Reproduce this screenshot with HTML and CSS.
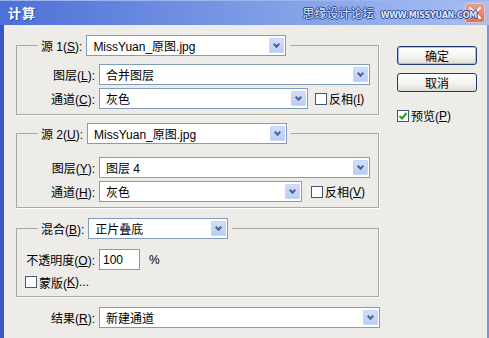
FILE: index.html
```html
<!DOCTYPE html>
<html lang="zh-CN">
<head>
    <meta charset="UTF-8">
    <title>计算</title>
    <link rel="stylesheet" href="styles.css">
</head>
<body>
<div class="window">
    <div class="titlebar">
        <span class="title">计算</span>
        <span class="close">
            <svg width="20" height="20" viewBox="0 0 20 20">
                <path d="M5 5 L15 15 M15 5 L5 15" stroke="#fff" stroke-width="2.4" stroke-linecap="round"/>
            </svg>
        </span>
        <span class="watermark">思缘设计论坛<small>WWW.MISSYUAN.COM</small></span>
    </div>

    <div class="dialog">
        <div class="main">
            <fieldset class="group group-1">
                <legend>
                    <span class="legend-label">源 1(<u>S</u>):</span>
                    <div class="select w-200"><span>MissYuan_原图.jpg</span><i class="arrow"></i></div>
                </legend>
                <div class="row">
                    <span class="label">图层(<u>L</u>):</span>
                    <div class="select w-271"><span>合并图层</span><i class="arrow"></i></div>
                </div>
                <div class="row">
                    <span class="label">通道(<u>C</u>):</span>
                    <div class="select w-209"><span>灰色</span><i class="arrow"></i></div>
                    <span class="check check-invert"><i class="box"></i>反相(<u>I</u>)</span>
                </div>
            </fieldset>

            <fieldset class="group group-2">
                <legend>
                    <span class="legend-label">源 2(<u>U</u>):</span>
                    <div class="select w-200"><span>MissYuan_原图.jpg</span><i class="arrow"></i></div>
                </legend>
                <div class="row">
                    <span class="label">图层(<u>Y</u>):</span>
                    <div class="select w-271"><span>图层 4</span><i class="arrow"></i></div>
                </div>
                <div class="row">
                    <span class="label">通道(<u>H</u>):</span>
                    <div class="select w-203"><span>灰色</span><i class="arrow"></i></div>
                    <span class="check check-invert wide"><i class="box"></i>反相(<u>V</u>)</span>
                </div>
            </fieldset>

            <fieldset class="group group-3">
                <legend>
                    <span class="legend-label">混合(<u>B</u>):</span>
                    <div class="select w-140"><span>正片叠底</span><i class="arrow"></i></div>
                </legend>
                <div class="row">
                    <span class="label">不透明度(<u>O</u>):</span>
                    <div class="input"><span>100</span></div>
                    <span class="unit">%</span>
                </div>
                <div class="row-check">
                    <span class="check"><i class="box"></i>蒙版(<u>K</u>)...</span>
                </div>
            </fieldset>

            <div class="row result">
                <span class="label">结果(<u>R</u>):</span>
                <div class="select w-281"><span>新建通道</span><i class="arrow"></i></div>
            </div>
        </div>

        <div class="side">
            <button class="btn default">确定</button>
            <button class="btn">取消</button>
            <span class="check preview"><i class="box checked">
                <svg width="10" height="10" viewBox="0 0 10 10"><path d="M1.5 5 L4 7.5 L8.5 2" fill="none" stroke="#21a121" stroke-width="2"/></svg>
            </i>预览(<u>P</u>)</span>
        </div>
    </div>
</div>
</body>
</html>
```

FILE: styles.css
```css
html, body {
    margin: 0;
    height: 100%;
}

body {
    font-family: "Liberation Sans", "Noto Sans CJK SC", sans-serif;
    font-size: 12px;
    color: #000;
    background-color: #edece9;
}

.window {
    width: 489px;
    height: 338px;
    display: flex;
    flex-direction: column;
    overflow: hidden;
}

/* title bar */
.titlebar {
    position: relative;
    height: 25px;
    flex: none;
    display: flex;
    align-items: center;
    background: linear-gradient(to right, #4d70d6, #7f9ee6 55%, #a8bff2);
    box-shadow: inset 0 1px 0 #9db4ef;
}

.title {
    color: #fff;
    font-weight: bold;
    font-size: 13px;
    margin-left: 8px;
    letter-spacing: 1px;
    text-shadow: 1px 1px 0 #3553a8;
}

.close {
    margin-left: auto;
    margin-right: 4px;
    width: 20px;
    height: 20px;
    border-radius: 3px;
    background: linear-gradient(to bottom, #e8a08e, #d9705a);
    box-shadow: inset 0 0 0 1px #f2c3b6;
    display: flex;
}

.watermark {
    position: absolute;
    right: 12px;
    top: 7px;
    display: flex;
    align-items: baseline;
    color: #dde5fa;
    font-size: 12px;
    line-height: 14px;
    text-shadow: 1px 0 0 #2b4596, -1px 0 0 #2b4596, 0 1px 0 #2b4596, 0 -1px 0 #2b4596;
}

.watermark small {
    font-family: "DejaVu Sans", sans-serif;
    font-weight: bold;
    font-size: 8px;
    margin-left: 6px;
    letter-spacing: -0.2px;
}

/* dialog body */
.dialog {
    flex: 1;
    display: flex;
    border-left: 4px solid #3658c4;
    border-right: 2px solid #7d93de;
}

.main {
    width: 381px;
    padding-top: 10px;
}

.group {
    width: 361px;
    margin: 0 0 0 12px;
    padding: 0 0 5px 0;
    border: 1px solid #a9a89f;
    box-shadow: 1px 1px 0 #fff;
}

.group legend {
    display: flex;
    align-items: center;
    margin-left: 21px;
    padding: 0 4px 0 3px;
}

.legend-label {
    margin-right: 4px;
}

.group-1 .row:first-of-type {
    margin-top: 8px;
}

.group-2 {
    margin-top: 8px;
}

.group-2 .row:first-of-type {
    margin-top: 13px;
}

.group-3 {
    margin-top: 10px;
    padding-bottom: 7px;
}

.group-3 .row:first-of-type {
    margin-top: 10px;
}

.row {
    display: flex;
    align-items: center;
    height: 21px;
    margin-top: 3px;
}

.label {
    width: 78px;
    text-align: right;
    margin-right: 4px;
    white-space: nowrap;
}

.result {
    margin: 10px 0 0 13px;
}

/* dropdowns */
.select {
    height: 21px;
    box-sizing: border-box;
    border: 1px solid #7f9db9;
    background-color: #fff;
    display: flex;
    align-items: center;
    padding-left: 6px;
}

.select span {
    flex: 1;
    white-space: nowrap;
}

.arrow {
    width: 15px;
    height: 15px;
    margin-right: 1px;
    border-radius: 2px;
    background: linear-gradient(to bottom, #d3e0fb, #b8cbf6);
    box-shadow: inset 0 0 0 1px #c6d5f8;
    position: relative;
}

.arrow::after {
    content: "";
    position: absolute;
    left: 5px;
    top: 4px;
    width: 3px;
    height: 3px;
    border-right: 2px solid #4d6185;
    border-bottom: 2px solid #4d6185;
    transform: rotate(45deg);
}

.w-140 { width: 140px; }
.w-200 { width: 200px; }
.w-203 { width: 203px; }
.w-209 { width: 209px; }
.w-271 { width: 271px; }
.w-281 { width: 281px; }

.input {
    width: 41px;
    height: 21px;
    box-sizing: border-box;
    border: 1px solid #7f9db9;
    background-color: #fff;
    display: flex;
    align-items: center;
    padding-left: 3px;
}

.unit {
    margin-left: 9px;
}

/* checkboxes */
.check {
    display: flex;
    align-items: center;
    white-space: nowrap;
}

.box {
    width: 12px;
    height: 12px;
    box-sizing: border-box;
    border: 1px solid #3f5778;
    background-color: #fff;
    margin-right: 2px;
    display: flex;
    align-items: center;
    justify-content: center;
}

.check-invert {
    margin-left: 7px;
}

.check-invert.wide {
    margin-left: 9px;
}

.row-check {
    margin: 5px 0 0 8px;
    height: 14px;
    display: flex;
    align-items: center;
}

/* right column */
.side {
    display: flex;
    flex-direction: column;
    align-items: flex-start;
    padding: 21px 0 0 12px;
}

.btn {
    width: 80px;
    height: 19px;
    padding: 0;
    font-family: inherit;
    font-size: 12px;
    border: 1px solid #1f3f73;
    border-radius: 3px;
    background: linear-gradient(to bottom, #ffffff, #f3f2ee 60%, #dedcd2);
    color: #000;
}

.btn.default {
    box-shadow: inset 0 0 0 1px #a8bfee;
}

.btn + .btn {
    margin-top: 8px;
}

.preview {
    margin-top: 15px;
}
```
